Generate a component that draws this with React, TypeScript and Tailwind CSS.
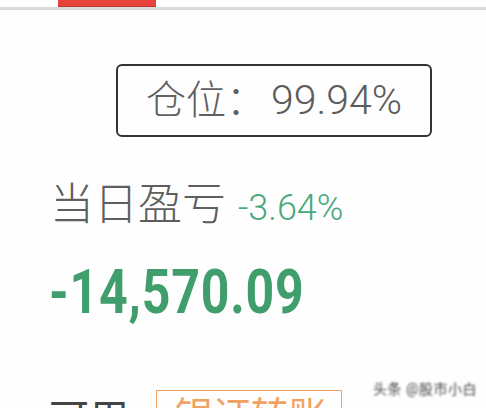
export default function App() {
  const cjk = { fontFamily: "Roboto, 'Noto Sans CJK SC', sans-serif" };
  return (
    <div
      className="relative w-[486px] h-[408px] overflow-hidden bg-[#fefefe]"
      style={cjk}
    >
      {/* top tab indicator */}
      <div className="h-[7px] flex">
        <div className="ml-[58px] w-[98px] h-[7px] bg-[#e8433a] border-b border-[#c0392f]" />
      </div>
      <div className="h-[3px] bg-[#dadada]" />

      {/* position box */}
      <div className="mt-[54px] ml-[116px] w-[316px] h-[73px] border-2 border-[#333333] rounded-[6px] flex items-center pl-[28px]">
        <span className="text-[40px] leading-none font-light text-[#606060]">仓位：</span>
        <span className="ml-[5px] text-[41px] leading-none font-light text-[#5c5c5c]">99.94%</span>
      </div>

      {/* daily P/L label */}
      <div className="mt-[46px] ml-[50px] flex items-baseline">
        <span className="text-[44px] leading-none font-light text-[#5e5e5e]">当日盈亏</span>
        <span className="ml-[12px] text-[36px] leading-none font-light text-[#4aa97c]">-3.64%</span>
      </div>

      {/* big number */}
      <div className="mt-[35px] ml-[49px] flex">
        <span className="text-[61px] leading-none font-bold text-[#3f9e6b] origin-left scale-x-[0.82] inline-block tracking-[1px]">
          -14,570.09
        </span>
      </div>

      {/* bottom row */}
      <div className="mt-[67px] ml-[49px] flex items-start gap-[27px]">
        <span className="mt-[10px] text-[40px] leading-none text-[#444444]">可用</span>
        <div className="w-[186px] h-[60px] border-[1.5px] border-[#eba265] pl-[18px] pt-[6px]">
          <span className="text-[38px] leading-none text-[#f0a262]">银证转账</span>
        </div>
      </div>

      {/* watermark */}
      <div className="absolute left-[373px] top-[382px] text-[14px] leading-none text-[#444] blur-[1.2px] tracking-[0.5px]">
        头条 @股市小白
      </div>
    </div>
  );
}
